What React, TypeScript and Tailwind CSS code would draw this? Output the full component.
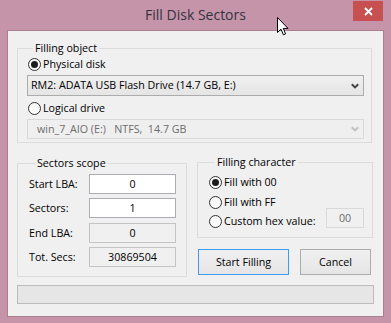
import React from 'react';

function Radio({ checked, label }: { checked?: boolean; label: string }) {
  return (
    <div className="flex h-[15px] items-center gap-[2px]">
      <span className="flex h-[13px] w-[13px] shrink-0 items-center justify-center rounded-full border border-[#333333] bg-gradient-to-b from-[#f4f4f4] to-[#ffffff]">
        {checked && <span className="h-[7px] w-[7px] rounded-full bg-[#1c1c1c]" />}
      </span>
      <span className="leading-[15px]">{label}</span>
    </div>
  );
}

function Chevron({ color }: { color: string }) {
  return (
    <svg width="8" height="6" viewBox="0 0 8 6">
      <path d="M0.8 1.2 L4 4.4 L7.2 1.2" fill="none" stroke={color} strokeWidth="2" />
    </svg>
  );
}

function Group({ title, className, children }: { title: string; className: string; children: React.ReactNode }) {
  return (
    <fieldset className={`border border-[#dcdcdc] ${className}`}>
      <legend className="ml-[6px] px-[2px] leading-[14px] text-black">{title}</legend>
      {children}
    </fieldset>
  );
}

function Field({ label, value, enabled }: { label: string; value: string; enabled?: boolean }) {
  return (
    <div className="flex h-[20px] items-center">
      <span className="w-[60px] leading-[14px]">{label}</span>
      <div
        className={`flex h-[20px] w-[87px] items-center justify-center border ${
          enabled ? 'border-[#abadb3] bg-white' : 'border-[#c4c4c4] bg-[#f0f0f0]'
        }`}
      >
        {value}
      </div>
    </div>
  );
}

export default function App() {
  return (
    <div className="relative flex h-[323px] w-[391px] flex-col bg-[#c594a9] px-[7px] pb-[6px] font-['Open_Sans',sans-serif] text-[10.7px] text-black">
      {/* title bar */}
      <div className="flex h-[30px] items-center justify-center">
        <span className="text-[14px] leading-[18px] text-[#33333d]">Fill Disk Sectors</span>
      </div>
      <div className="absolute right-[8px] top-[1px] flex h-[20px] w-[30px] items-center justify-center bg-[#c75050]">
        <svg width="9" height="9" viewBox="0 0 9 9">
          <path d="M1 1 L8 8 M8 1 L1 8" stroke="#ffffff" strokeWidth="1.8" />
        </svg>
      </div>

      {/* client area */}
      <div className="flex flex-1 flex-col border border-[#a9808f] bg-[#f0f0f0] px-[9px] pt-[10px]">
        <Group title="Filling object" className="w-[355px] pb-[3px] pl-[9px] pr-[7px] pt-[2px]">
          <div className="ml-[1px]">
            <Radio checked label="Physical disk" />
          </div>
          <div className="mt-[3px] flex h-[21px] items-center justify-between border border-[#acacac] bg-gradient-to-b from-[#f0f0f0] to-[#e5e5e5] pl-[3px] pr-[4px]">
            <span>RM2: ADATA USB Flash Drive (14.7 GB, E:)</span>
            <Chevron color="#444444" />
          </div>
          <div className="ml-[1px] mt-[5px]">
            <Radio label="Logical drive" />
          </div>
          <div className="mt-[3px] flex h-[20px] items-center justify-between border border-[#d9d9d9] bg-[#efefef] pl-[9px] pr-[4px] text-[#6d6d6d]">
            <span className="whitespace-pre">win_7_AIO (E:)   NTFS,  14.7 GB</span>
            <Chevron color="#c0c0c0" />
          </div>
        </Group>

        <div className="mt-[12px] flex items-start gap-[10px]">
          <Group title="Sectors scope" className="mt-[1px] w-[170px] pb-[9px] pl-[11px] pt-[4px]">
            <div className="flex flex-col gap-[4.33px]">
              <Field label="Start LBA:" value="0" enabled />
              <Field label="Sectors:" value="1" enabled />
              <Field label="End LBA:" value="0" />
              <Field label="Tot. Secs:" value="30869504" />
            </div>
          </Group>

          <div className="flex w-[176px] flex-col">
            <Group title="Filling character" className="w-[176px] pb-[6px] pl-[11px] pr-[8px] pt-[6px]">
              <Radio checked label="Fill with 00" />
              <div className="mt-[5px]">
                <Radio label="Fill with FF" />
              </div>
              <div className="mt-[1px] flex h-[20px] items-center justify-between">
                <Radio label="Custom hex value:" />
                <div className="-mt-[6px] flex h-[20px] w-[38px] items-center justify-center border border-[#d9d9d9] bg-[#f0f0f0] text-[#6d6d6d]">
                  00
                </div>
              </div>
            </Group>
            <div className="ml-[1px] mt-[11px] flex gap-[11px]">
              <div className="flex h-[26px] w-[91px] items-center justify-center border border-[#3c9df0] bg-gradient-to-b from-[#f0f0f0] to-[#e5e5e5]">
                Start Filling
              </div>
              <div className="flex h-[26px] w-[71px] items-center justify-center border border-[#acacac] bg-gradient-to-b from-[#f0f0f0] to-[#e5e5e5]">
                Cancel
              </div>
            </div>
          </div>
        </div>

        <div className="mt-[8px] h-[19px] w-[357px] border border-[#bcbcbc] bg-[#e6e6e6]" />
      </div>

      {/* mouse pointer */}
      <svg className="absolute left-[277px] top-[17px]" width="12" height="19" viewBox="0 0 12 19">
        <path
          d="M0.5 0.5 L0.5 15.5 L4 12.2 L6.4 17.8 L8.6 16.9 L6.3 11.4 L11 11.4 Z"
          fill="#ffffff"
          stroke="#000000"
          strokeWidth="1"
          strokeLinejoin="round"
        />
      </svg>
    </div>
  );
}
